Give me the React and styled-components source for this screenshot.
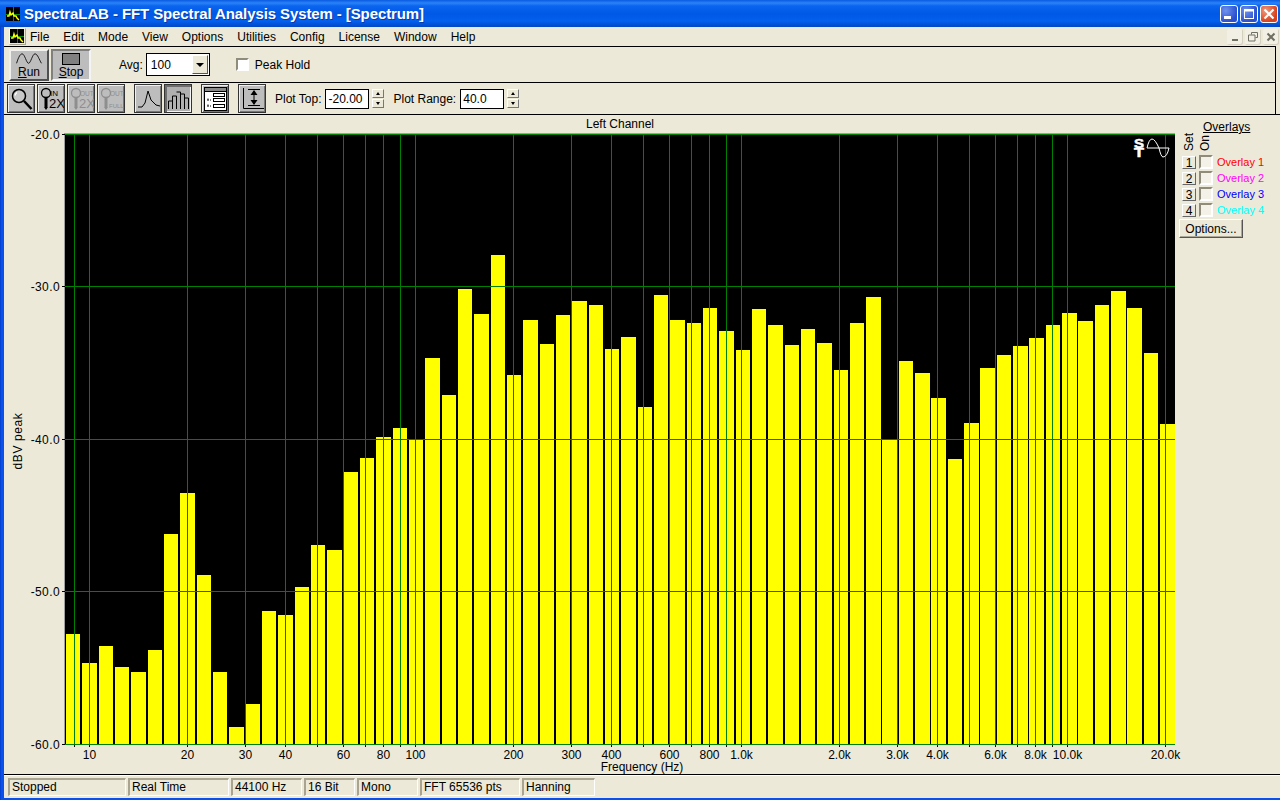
import React from "react";
import styled, { createGlobalStyle } from "styled-components";

const GlobalStyle = createGlobalStyle`
  html, body, #root {
    margin: 0;
    padding: 0;
    height: 100%;
    overflow: hidden;
  }
  body {
    font-family: "Liberation Sans", Arial, sans-serif;
    font-size: 12px;
    color: #000;
  }
`;

const BAR_TOPS = [
  634, 663, 646, 667, 672, 650, 534, 493, 575, 672, 727, 704, 611, 615, 587, 545, 550,
  472, 458, 437, 428, 440, 358, 395, 289, 314, 255, 375, 320, 344, 315, 301, 305, 349,
  337, 407, 295, 320, 323, 308, 331, 350, 309, 325, 345, 329, 343, 370, 323, 297, 440,
  361, 373, 398, 459, 423, 368, 355, 346, 338, 325, 313, 321, 305, 291, 308, 353, 424,
];

const MENU = ["File", "Edit", "Mode", "View", "Options", "Utilities", "Config", "License", "Window", "Help"];

const OVERLAYS = [
  { id: 1, color: "#ff0000" },
  { id: 2, color: "#ff00ff" },
  { id: 3, color: "#0000ff" },
  { id: 4, color: "#00ffff" },
];

const STATUS = [
  { text: "Stopped", width: 118 },
  { text: "Real Time", width: 101 },
  { text: "44100 Hz", width: 71 },
  { text: "16 Bit", width: 51 },
  { text: "Mono", width: 61 },
  { text: "FFT 65536 pts", width: 100 },
  { text: "Hanning", width: 73 },
];

const FREQ_LABELS = [
  [10, "10"], [20, "20"], [30, "30"], [40, "40"], [60, "60"], [80, "80"], [100, "100"],
  [200, "200"], [300, "300"], [400, "400"], [600, "600"], [800, "800"], [1000, "1.0k"],
  [2000, "2.0k"], [3000, "3.0k"], [4000, "4.0k"], [6000, "6.0k"], [8000, "8.0k"],
  [10000, "10.0k"], [20000, "20.0k"],
];

const GRID_FREQS = [
  9, 10, 20, 30, 40, 50, 60, 70, 80, 90, 100, 200, 300, 400, 500, 600, 700, 800, 900, 1000,
  2000, 3000, 4000, 5000, 6000, 7000, 8000, 9000, 10000, 20000,
];

const DB_LABELS = [
  [134, "-20.0"],
  [286.5, "-30.0"],
  [439, "-40.0"],
  [591.5, "-50.0"],
  [744, "-60.0"],
];

// svg sits at (4, 115) in the page
const ox = 4;
const oy = 115;
const freqX = (f) => Math.round(89 + 326 * Math.log10(f / 10)) + 0.5 - ox;

const AppIcon = () => (
  <svg width="14" height="14" viewBox="0 0 14 14">
    <rect width="14" height="14" fill="#000" />
    <path d="M0 7.5H14M7.5 0V14" stroke="#0a8a0a" strokeWidth="1" />
    <path d="M1 9L3 9L4 5L5 8L7 6L8 9L10 9L11 11L13 13" stroke="#ffff00" strokeWidth="1.4" fill="none" />
  </svg>
);

const MagnifierIcon = () => (
  <svg width="25" height="26" viewBox="0 0 25 26">
    <circle cx="10" cy="10" r="6.5" fill="#c8c8c8" stroke="#000" strokeWidth="1.5" />
    <path d="M8 6.5a5 5 0 0 0-2 3" stroke="#fff" strokeWidth="1.2" fill="none" />
    <path d="M15 15L22.5 23" stroke="#000" strokeWidth="2.5" />
  </svg>
);

const ZoomIcon = ({ top, bottom, color = "#000" }) => (
  <svg width="25" height="26" viewBox="0 0 25 26">
    <circle cx="7" cy="7" r="4.5" fill="none" stroke={color} strokeWidth="1.3" />
    <path d="M7 12V21" stroke={color} strokeWidth="3" />
    <path d="M5 21L7 24L9 21Z" fill={color} />
    <IconText x="11" y="10" fill={color} $size={top === "IN" ? 8 : 6.5}>{top}</IconText>
    <IconText x="10" y="22" fill={color} $size={bottom === "2X" ? 13 : 6}>{bottom}</IconText>
  </svg>
);

const PeakIcon = () => (
  <svg width="25" height="26" viewBox="0 0 25 26">
    <path d="M2 21H6L9 17L12 5L15 14L18 17L20 19L24 20" stroke="#000" strokeWidth="1" fill="none" />
  </svg>
);

const BarsIcon = () => (
  <svg width="25" height="26" viewBox="0 0 25 26">
    <path
      d="M2.5 23V15H6.5V23M6.5 15V10H10.5V23M10.5 6H14.5V23M14.5 8H18.5V23M18.5 12H22.5V23"
      stroke="#000"
      strokeWidth="1"
      fill="none"
    />
  </svg>
);

const SettingsIcon = () => (
  <svg width="25" height="26" viewBox="0 0 25 26">
    <rect x="1.5" y="1.5" width="22" height="23" fill="#fff" stroke="#000" />
    <rect x="2" y="2" width="21" height="3" fill="#8a8a8a" />
    <path d="M2 5.5H23" stroke="#000" />
    <rect x="10.5" y="7.5" width="11" height="3" fill="#fff" stroke="#000" />
    <rect x="10.5" y="12.5" width="11" height="3" fill="#fff" stroke="#000" />
    <rect x="10.5" y="18.5" width="11" height="3" fill="#fff" stroke="#000" />
    <path d="M4 14h2M7 14h1M4 20h2M7 20h1M5 12.5v1M5 18.5v1" stroke="#000" />
  </svg>
);

const ScaleIcon = () => (
  <svg width="25" height="26" viewBox="0 0 25 26">
    <path d="M3.5 2V22.5H24" stroke="#000" fill="none" />
    <path d="M8 3.5H20M8 19.5H20M14 5V18" stroke="#000" />
    <path d="M14 4L10.5 9H17.5ZM14 19L10.5 14H17.5Z" fill="#000" />
  </svg>
);

const Window = styled.div`
  height: 100vh;
  box-sizing: border-box;
  display: flex;
  flex-direction: column;
  padding: 0 0 2px 4px;
  background: linear-gradient(90deg, #0036b8 0, #0a50ee 1px, #0a50ee 100%);
`;

const TitleBar = styled.div`
  height: 27px;
  margin-left: -4px;
  padding: 0 2px 0 6px;
  flex: none;
  display: flex;
  align-items: center;
  gap: 4px;
  color: #fff;
  background: linear-gradient(
    180deg,
    #0a5ae0 0,
    #2a83f8 3px,
    #0a64ee 6px,
    #0058e6 14px,
    #0460ee 21px,
    #0246c4 27px
  );
`;

const TitleText = styled.span`
  flex: 1;
  font: bold 15px "Liberation Sans", Arial, sans-serif;
  letter-spacing: -0.1px;
  white-space: nowrap;
  text-shadow: 1px 1px 0 #0a3aa8;
`;

const CaptionGroup = styled.div`
  display: flex;
  gap: 2px;
  margin-top: 1px;
`;

const CaptionButton = styled.div`
  width: 18px;
  height: 18px;
  box-sizing: border-box;
  border: 1px solid #fff;
  border-radius: 3px;
  display: flex;
  align-items: center;
  justify-content: center;
  background: ${(p) =>
    p.$close
      ? "radial-gradient(circle at 30% 30%, #ef9a7c, #d8421c 70%)"
      : "radial-gradient(circle at 30% 30%, #6f92ec, #2a50d0 70%)"};
`;

const Client = styled.div`
  flex: 1;
  min-height: 0;
  display: flex;
  flex-direction: column;
  background: #ece9d8;
`;

const MenuBar = styled.div`
  height: 19px;
  flex: none;
  padding: 0 1px 0 5px;
  display: flex;
  align-items: center;
`;

const MenuIcon = styled.div`
  width: 15px;
  height: 15px;
  margin-right: 4px;
  line-height: 0;
  border: 1px solid #f8f7f0;
  border-right-color: #a8a490;
  border-bottom-color: #a8a490;
`;

const MenuList = styled.div`
  flex: 1;
  display: flex;
  gap: 14px;
`;

const MenuItem = styled.span`
  white-space: nowrap;
`;

const MdiGroup = styled.div`
  display: flex;
  gap: 2px;
`;

const MdiButton = styled.div`
  width: 16px;
  height: 16px;
  box-sizing: border-box;
  display: flex;
  align-items: center;
  justify-content: center;
  border-radius: 2px;
  background: #f2f0e4;
  box-shadow: inset -1px -1px 0 #d4d0c0;
`;

const Toolbar = styled.div`
  flex: none;
  height: ${(p) => p.$height}px;
  box-sizing: border-box;
  margin-right: 4px;
  border-top: 1px solid #000;
  border-right: 1px solid #000;
  display: flex;
  align-items: center;
`;

const TransportButton = styled.button`
  width: 40px;
  height: 32px;
  margin: 0 0 0 ${(p) => p.$left}px;
  padding: 2px 0 0;
  box-sizing: border-box;
  display: flex;
  flex-direction: column;
  align-items: center;
  justify-content: space-between;
  background: #bdbdbd;
  font: 12px "Liberation Sans", Arial, sans-serif;
  color: #000;
  border: 2px solid;
  border-color: ${(p) =>
    p.$pressed ? "#808080 #f4f4f4 #f4f4f4 #808080" : "#f0f0f0 #505050 #505050 #f0f0f0"};
`;

const Mnemonic = styled.u`
  text-decoration: underline;
`;

const FieldLabel = styled.span`
  margin-left: ${(p) => p.$left}px;
  white-space: nowrap;
`;

const SelectBox = styled.div`
  width: 64px;
  height: 23px;
  margin-left: 3px;
  box-sizing: border-box;
  border: 1px solid #000;
  background: #fff;
  display: flex;
  align-items: center;
  justify-content: space-between;
  padding-left: 4px;
  font-size: 12px;
`;

const SelectArrow = styled.div`
  width: 16px;
  height: 19px;
  margin-right: 1px;
  box-sizing: border-box;
  background: #ece9d8;
  border: 1px solid;
  border-color: #fff #555 #555 #fff;
  display: flex;
  align-items: center;
  justify-content: center;

  &::after {
    content: "";
    border-left: 4px solid transparent;
    border-right: 4px solid transparent;
    border-top: 4px solid #000;
  }
`;

const CheckBox = styled.span`
  display: block;
  flex: none;
  width: ${(p) => p.$size}px;
  height: ${(p) => p.$size}px;
  margin-left: ${(p) => p.$left || 0}px;
  box-sizing: border-box;
  background: ${(p) => (p.$muted ? "#f4f2e8" : "#fff")};
  border: 2px solid;
  border-color: #8f8c7c #fff #fff #8f8c7c;
`;

const IconButton = styled.button`
  width: 28px;
  height: 29px;
  margin: 0 0 0 ${(p) => p.$left}px;
  padding: 0;
  box-sizing: border-box;
  line-height: 0;
  background: ${(p) => (p.$pressed ? "#b0b0b0" : "#bdbdbd")};
  border: 1px solid #333;
  box-shadow: ${(p) =>
    p.$pressed
      ? "inset 2px 2px 0 #6e6e6e, inset -1px -1px 0 #f4f4f4"
      : "inset 1px 1px 0 #f0f0f0, inset -1px -1px 0 #777"};
`;

const NumberField = styled.div`
  width: 44px;
  height: 20px;
  margin-left: ${(p) => p.$left}px;
  box-sizing: border-box;
  border: 1px solid #000;
  background: #fff;
  padding-left: 2px;
  line-height: 18px;
`;

const Spinner = styled.div`
  width: 12px;
  margin-left: 3px;
  display: flex;
  flex-direction: column;
  gap: 1px;
`;

const SpinButton = styled.div`
  height: 9px;
  box-sizing: border-box;
  background: #ece9d8;
  border: 1px solid;
  border-color: #fff #777 #777 #fff;
  display: flex;
  align-items: center;
  justify-content: center;

  &::after {
    content: "";
    border-left: 2px solid transparent;
    border-right: 2px solid transparent;
    ${(p) => (p.$down ? "border-top: 3px solid #000;" : "border-bottom: 3px solid #000;")}
  }
`;

const Main = styled.div`
  flex: 1;
  min-height: 0;
  display: flex;
  border-top: 1px solid #000;
`;

const PlotSvg = styled.svg`
  display: block;
  flex: none;
  overflow: visible;
`;

const AxisText = styled.text`
  font: 12px "Liberation Sans", Arial, sans-serif;
  letter-spacing: ${(p) => p.$spacing || 0}px;
  fill: #000;
`;

const IconText = styled.text`
  font: ${(p) => p.$size}px "Liberation Sans", Arial, sans-serif;
`;

const SweepText = styled.text`
  font: bold 12px "Liberation Sans", Arial, sans-serif;
  fill: #fff;
  stroke: #fff;
  stroke-width: 0.5px;
`;

const OverlayPanel = styled.div`
  flex: 1;
  box-sizing: border-box;
  padding: 5px 0 0 4px;
  display: flex;
  flex-direction: column;
`;

const OverlayTitle = styled.div`
  margin-left: 24px;
  height: 14px;
  line-height: 14px;
  text-decoration: underline;
`;

const OverlayHead = styled.div`
  height: 18px;
  margin: -1px 0 3px;
  display: flex;
  gap: 2px;
  padding-left: 3px;
`;

const VerticalLabel = styled.span`
  width: 14px;
  writing-mode: vertical-rl;
  transform: rotate(180deg);
  line-height: 14px;
  text-align: left;
  white-space: nowrap;
`;

const OverlayRow = styled.div`
  height: 16px;
  display: flex;
  align-items: center;
  padding-left: 3px;
`;

const SetButton = styled.div`
  width: 14px;
  height: 13px;
  box-sizing: border-box;
  margin-right: 3px;
  text-align: center;
  line-height: 12px;
  background: #ece9d8;
  border: 1px solid;
  border-color: #fff #666 #666 #fff;
`;

const OverlayName = styled.span`
  margin-left: 4px;
  font-size: 11px;
  color: ${(p) => p.$color};
  white-space: nowrap;
`;

const OptionsButton = styled.button`
  width: 64px;
  height: 19px;
  margin-top: 1px;
  padding: 0;
  font: 12px "Liberation Sans", Arial, sans-serif;
  color: #000;
  background: #ece9d8;
  border: 1px solid;
  border-color: #fff #555 #555 #fff;
  box-shadow: inset -1px -1px 0 #aca899;
`;

const StatusBar = styled.div`
  height: 24px;
  flex: none;
  box-sizing: border-box;
  border-top: 1px solid #000;
  box-shadow: inset 0 1px 0 #fff;
  padding: 3px 0 0 4px;
  display: flex;
  gap: 2px;
`;

const StatusPane = styled.div`
  width: ${(p) => p.$width}px;
  height: 18px;
  box-sizing: border-box;
  padding-left: 2px;
  line-height: 14px;
  white-space: nowrap;
  border: 1px solid;
  border-width: 2px 1px 1px 2px;
  border-color: #a8a490 #fff #fff #a8a490;
`;

const Plot = () => {
  const left = 65 - ox;
  const right = 1175 - ox;
  const top = 134 - oy;
  const bottom = 744 - oy;
  return (
    <PlotSvg width="1171" height="658" viewBox="0 0 1171 658">
      <AxisText x="616" y="13" textAnchor="middle">Left Channel</AxisText>
      <rect x={left - 1} y={top - 1} width={right - left + 1} height={bottom - top + 2} fill="#a0a0a0" />
      <rect x={left} y={top} width={right - left} height={bottom - top} fill="#000" />
      {BAR_TOPS.map((y, i) => {
        const x0 = Math.round(66 + i * 16.33) - ox;
        const x1 = Math.round(66 + i * 16.33 + 14.4) - ox;
        return <rect key={i} x={x0} y={y - oy} width={x1 - x0} height={744 - y} fill="#ffff00" />;
      })}
      {GRID_FREQS.map((f) => (
        <g key={f}>
          <path d={`M${freqX(f)} ${top}V${bottom}`} stroke="#008000" />
          <path d={`M${freqX(f)} ${bottom}v3`} stroke="#000" />
        </g>
      ))}
      {DB_LABELS.map(([y, label]) => {
        const py = Math.floor(y) + 0.5 - oy;
        return (
          <g key={label}>
            <path d={`M${left} ${py}H${right}`} stroke="#008000" />
            <path d={`M${left - 3} ${py}h3`} stroke="#000" />
            <AxisText x={left - 5} y={py + 4.5} textAnchor="end" $spacing={0.4}>{label}</AxisText>
          </g>
        );
      })}
      {FREQ_LABELS.map(([f, label]) => (
        <AxisText key={label} x={freqX(f)} y="644" textAnchor="middle">{label}</AxisText>
      ))}
      <AxisText x="638" y="656" textAnchor="middle">Frequency (Hz)</AxisText>
      <AxisText transform="translate(17.5 326) rotate(-90)" textAnchor="middle" $spacing={0.6}>dBV peak</AxisText>
      <g transform="translate(1130 24)">
        <SweepText x="0" y="9" textLength="10" lengthAdjust="spacingAndGlyphs">S</SweepText>
        <SweepText x="0" y="18" textLength="10" lengthAdjust="spacingAndGlyphs">T</SweepText>
        <path d="M13 9Q15 0 18 0Q21 0 25 9Q27 18 29 18Q33 18 35 9H13" stroke="#fff" strokeWidth="1" fill="none" />
      </g>
    </PlotSvg>
  );
};

const Overlays = () => (
  <OverlayPanel>
    <OverlayTitle>Overlays</OverlayTitle>
    <OverlayHead>
      <VerticalLabel>Set</VerticalLabel>
      <VerticalLabel>On</VerticalLabel>
    </OverlayHead>
    {OVERLAYS.map((o) => (
      <OverlayRow key={o.id}>
        <SetButton>{o.id}</SetButton>
        <CheckBox $size={14} $muted />
        <OverlayName $color={o.color}>Overlay {o.id}</OverlayName>
      </OverlayRow>
    ))}
    <OptionsButton>Options...</OptionsButton>
  </OverlayPanel>
);

const App = () => (
  <>
    <GlobalStyle />
    <Window>
      <TitleBar>
        <AppIcon />
        <TitleText>SpectraLAB - FFT Spectral Analysis System - [Spectrum]</TitleText>
        <CaptionGroup>
          <CaptionButton>
            <svg width="12" height="12" viewBox="0 0 12 12"><rect x="1" y="8" width="7" height="3" fill="#fff" /></svg>
          </CaptionButton>
          <CaptionButton>
            <svg width="12" height="12" viewBox="0 0 12 12"><rect x="1.5" y="1.5" width="9" height="9" fill="none" stroke="#fff" /><rect x="1" y="1" width="10" height="2.5" fill="#fff" /></svg>
          </CaptionButton>
          <CaptionButton $close>
            <svg width="12" height="12" viewBox="0 0 12 12"><path d="M1.5 1.5L10.5 10.5M10.5 1.5L1.5 10.5" stroke="#fff" strokeWidth="2.2" /></svg>
          </CaptionButton>
        </CaptionGroup>
      </TitleBar>
      <Client>
        <MenuBar>
          <MenuIcon><AppIcon /></MenuIcon>
          <MenuList>
            {MENU.map((m) => (
              <MenuItem key={m}>{m}</MenuItem>
            ))}
          </MenuList>
          <MdiGroup>
            <MdiButton>
              <svg width="10" height="10" viewBox="0 0 10 10"><path d="M2 8h6" stroke="#6e6e62" strokeWidth="2" /></svg>
            </MdiButton>
            <MdiButton>
              <svg width="10" height="10" viewBox="0 0 10 10"><path d="M3.5 2.5V0.5h6v5h-2M0.5 3h6.5v6h-6.5z" stroke="#6e6e62" fill="none" /></svg>
            </MdiButton>
            <MdiButton>
              <svg width="10" height="10" viewBox="0 0 10 10"><path d="M1.5 1.5L8.5 8.5M8.5 1.5L1.5 8.5" stroke="#6e6e62" strokeWidth="2" /></svg>
            </MdiButton>
          </MdiGroup>
        </MenuBar>
        <Toolbar $height={36}>
          <TransportButton $left={5}>
            <svg width="30" height="14" viewBox="0 0 30 14">
              <path d="M0.5 12C3 4 5 1 7 1C10 1 12 12 14.5 12C17 12 19 1 22 1C25 1 27 8 29.5 12" stroke="#000" fill="none" />
            </svg>
            <span><Mnemonic>R</Mnemonic>un</span>
          </TransportButton>
          <TransportButton $left={2} $pressed>
            <svg width="18" height="12" viewBox="0 0 18 12">
              <rect x="0.5" y="0.5" width="17" height="11" fill="#808080" stroke="#000" />
            </svg>
            <span><Mnemonic>S</Mnemonic>top</span>
          </TransportButton>
          <FieldLabel $left={28}>Avg:</FieldLabel>
          <SelectBox>
            100
            <SelectArrow />
          </SelectBox>
          <CheckBox $size={13} $left={26} />
          <FieldLabel $left={6}>Peak Hold</FieldLabel>
        </Toolbar>
        <Toolbar $height={32}>
          <IconButton $left={3}><MagnifierIcon /></IconButton>
          <IconButton $left={2}><ZoomIcon top="IN" bottom="2X" /></IconButton>
          <IconButton $left={2}><ZoomIcon top="OUT" bottom="2X" color="#8e8e8e" /></IconButton>
          <IconButton $left={2}><ZoomIcon top="OUT" bottom="FULL" color="#8e8e8e" /></IconButton>
          <IconButton $left={9}><PeakIcon /></IconButton>
          <IconButton $left={2} $pressed><BarsIcon /></IconButton>
          <IconButton $left={9}><SettingsIcon /></IconButton>
          <IconButton $left={9}><ScaleIcon /></IconButton>
          <FieldLabel $left={9}>Plot Top:</FieldLabel>
          <NumberField $left={4}>-20.00</NumberField>
          <Spinner>
            <SpinButton />
            <SpinButton $down />
          </Spinner>
          <FieldLabel $left={9}>Plot Range:</FieldLabel>
          <NumberField $left={4}>40.0</NumberField>
          <Spinner>
            <SpinButton />
            <SpinButton $down />
          </Spinner>
        </Toolbar>
        <Main>
          <Plot />
          <Overlays />
        </Main>
        <StatusBar>
          {STATUS.map((s) => (
            <StatusPane key={s.text} $width={s.width}>{s.text}</StatusPane>
          ))}
        </StatusBar>
      </Client>
    </Window>
  </>
);

export default App;
